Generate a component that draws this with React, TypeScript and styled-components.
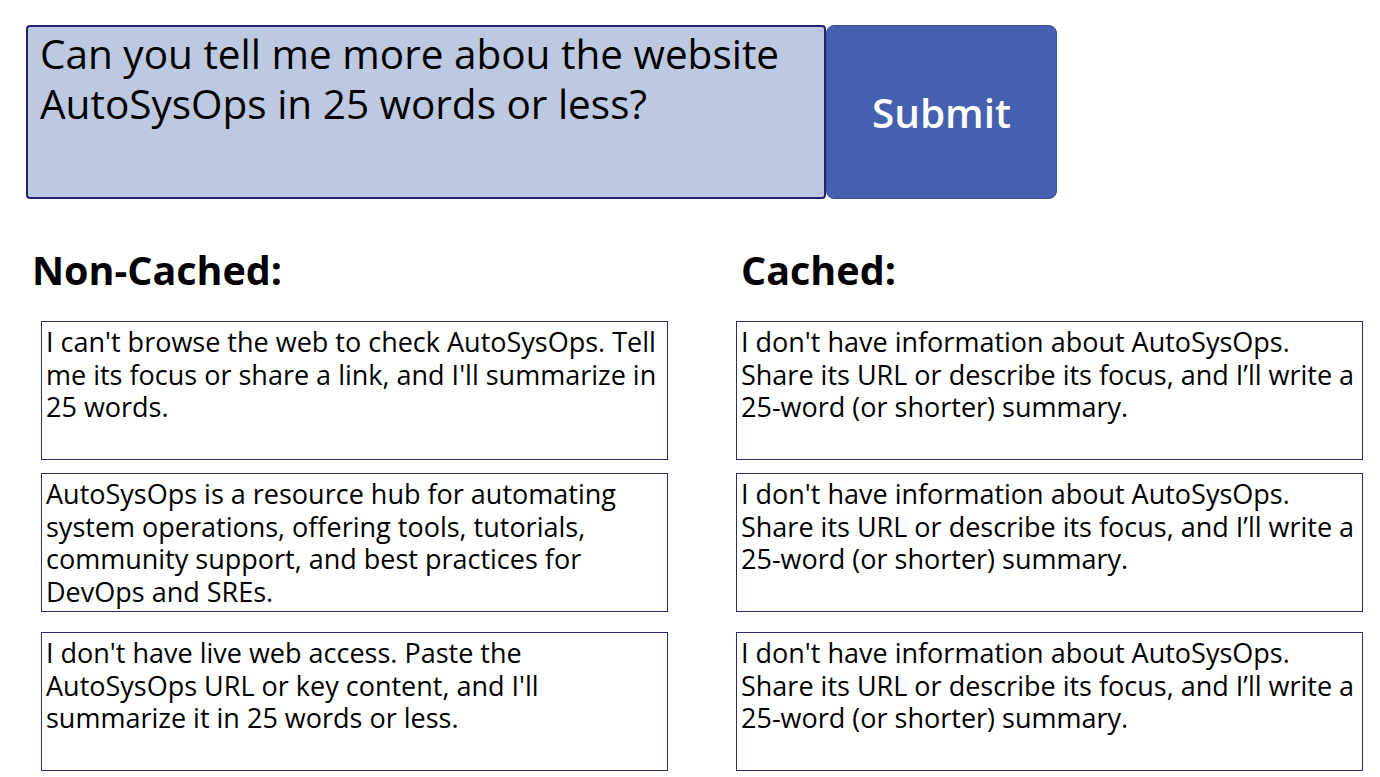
import React from 'react'
import styled, { createGlobalStyle } from 'styled-components'

const GlobalStyle = createGlobalStyle`
  html, body {
    margin: 0;
    padding: 0;
    background: #ffffff;
  }
  body {
    font-family: "Open Sans", "Noto Sans", sans-serif;
    color: #000000;
  }
`

const Page = styled.div`
  width: 1380px;
  height: 777px;
  overflow: hidden;
  box-sizing: border-box;
  padding: 25px 0 0 26px;
`

const PromptRow = styled.div`
  display: flex;
  height: 174px;
`

const PromptBox = styled.div`
  width: 800px;
  box-sizing: border-box;
  background: #bdc9e1;
  border: 2px solid #1f2370;
  border-radius: 4px;
  padding: 2px 12px;
  font-size: 40.5px;
  line-height: 50px;
`

const SubmitButton = styled.button`
  width: 231px;
  box-sizing: border-box;
  background: #4460ae;
  border: 1px solid #3a539a;
  border-radius: 8px;
  color: #ffffff;
  font-family: "Open Sans", "Noto Sans", sans-serif;
  font-weight: 600;
  font-size: 40.5px;
  padding: 0;
`

const Columns = styled.div`
  display: grid;
  grid-template-columns: 710px 640px;
  margin-top: 46px;
`

const Column = styled.div`
  display: flex;
  flex-direction: column;
`

const Heading = styled.h2<{ $indent: number }>`
  margin: 0 0 26px ${p => p.$indent}px;
  font-size: 39.5px;
  line-height: 50px;
  font-weight: 700;
`

const Answer = styled.div<{ $indent: number; $gap: number }>`
  width: 627px;
  height: 139px;
  box-sizing: border-box;
  margin: ${p => p.$gap}px 0 0 ${p => p.$indent}px;
  border: 1px solid #2b2d78;
  padding: 4px 4px;
  font-size: 27px;
  line-height: 32.5px;
`

const nonCached = [
  "I can't browse the web to check AutoSysOps. Tell me its focus or share a link, and I'll summarize in 25 words.",
  'AutoSysOps is a resource hub for automating system operations, offering tools, tutorials, community support, and best practices for DevOps and SREs.',
  "I don't have live web access. Paste the AutoSysOps URL or key content, and I'll summarize it in 25 words or less.",
]

const cachedText =
  "I don't have information about AutoSysOps. Share its URL or describe its focus, and I\u2019ll write a 25-word (or shorter) summary."

const cached = [cachedText, cachedText, cachedText]

const gaps = [0, 13, 20]

const App: React.FC = () => {
  return (
    <>
      <GlobalStyle />
      <Page>
        <PromptRow>
          <PromptBox>Can you tell me more abou the website AutoSysOps in 25 words or less?</PromptBox>
          <SubmitButton>Submit</SubmitButton>
        </PromptRow>
        <Columns>
          <Column>
            <Heading $indent={6}>Non-Cached:</Heading>
            {nonCached.map((text, i) => (
              <Answer key={i} $indent={15} $gap={gaps[i]}>{text}</Answer>
            ))}
          </Column>
          <Column>
            <Heading $indent={5}>Cached:</Heading>
            {cached.map((text, i) => (
              <Answer key={i} $indent={0} $gap={gaps[i]}>{text}</Answer>
            ))}
          </Column>
        </Columns>
      </Page>
    </>
  )
}

export default App
